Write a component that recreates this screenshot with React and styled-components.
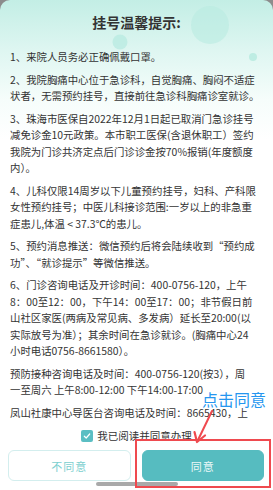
import React from 'react'
import styled, { createGlobalStyle } from 'styled-components'

const Global = createGlobalStyle`
  html, body { margin: 0; padding: 0; }
  *, *::before, *::after { box-sizing: border-box; }
  body {
    background: #8c8c8c;
    font-family: "Noto Sans CJK SC", "Noto Sans", sans-serif;
  }
`;

const Page = styled.div`
  position: relative;
  width: 273px;
  height: 490px;
  overflow: hidden;
`;

const Card = styled.div`
  height: 490px;
  display: flex;
  flex-direction: column;
  border-radius: 10px 10px 0 0;
  background: linear-gradient(180deg, #c3eee5 0px, #def6f1 50px, #f6fdfb 100px, #ffffff 140px);
  overflow: hidden;
`;

const Body = styled.div`
  position: relative;
  flex: 1;
  min-height: 0;
  overflow: hidden;
  padding: 12px 10px 0 10px;
`;

const Bubbles = styled.svg`
  position: absolute;
  left: 0;
  top: 0;
  pointer-events: none;
`;

const Title = styled.h2`
  position: relative;
  margin: 0 0 17px;
  text-align: center;
  font-size: 14px;
  line-height: 20px;
  font-weight: 700;
  color: #333;
`;

const Para = styled.div`
  position: relative;
  margin-bottom: 6px;
  font-size: 10.4px;
  line-height: 16.5px;
  color: #333;
`;

const Line = styled.div`
  white-space: nowrap;
`;

const Footer = styled.div`
  background: #fff;
  padding: 5px 0 0;
  display: flex;
  flex-direction: column;
  align-items: center;
  height: 66px;
  flex-shrink: 0;
`;

const Agree = styled.label`
  display: flex;
  align-items: center;
  gap: 4px;
  font-size: 10.5px;
  line-height: 14px;
  color: #333;
`;

const Check = styled.span`
  width: 12px;
  height: 12px;
  border-radius: 2px;
  background: #5bbec3;
  display: flex;
  align-items: center;
  justify-content: center;
`;

const Buttons = styled.div`
  align-self: stretch;
  display: flex;
  gap: 11px;
  padding: 0 9px 0 8px;
  margin-top: 7px;
`;

const Button = styled.button`
  flex: 1;
  height: 31px;
  border-radius: 6px;
  font-family: inherit;
  font-size: 11px;
  letter-spacing: 1px;
  border: 1px solid ${p => (p.$primary ? '#56bcc0' : '#d3eeee')};
  background: ${p => (p.$primary ? '#56bcc0' : '#fff')};
  color: ${p => (p.$primary ? '#eaf8f8' : '#7ccfcf')};
`;

const HomeBar = styled.div`
  width: 82px;
  height: 4px;
  border-radius: 2px;
  background: #a9a9a9;
  margin-top: 1px;
`;

const Highlight = styled.div`
  position: absolute;
  left: 135px;
  top: 439px;
  width: 136px;
  height: 49px;
  border: 2px solid #ef4a4f;
`;

const Arrow = styled.svg`
  position: absolute;
  left: 185px;
  top: 405px;
  pointer-events: none;
`;

const Hint = styled.span`
  position: absolute;
  left: 202px;
  top: 388px;
  font-size: 16px;
  line-height: 22px;
  color: #2596ef;
  white-space: nowrap;
`;

const paras = [
  ['1、来院人员务必正确佩戴口罩。'],
  ['2、我院胸痛中心位于急诊科，自觉胸痛、胸闷不适症', '状者，无需预约挂号，直接前往急诊科胸痛诊室就诊。'],
  [
    '3、珠海市医保自2022年12月1日起已取消门急诊挂号',
    '减免诊金10元政策。本市职工医保(含退休职工）签约',
    '我院为门诊共济定点后门诊诊金按70%报销(年度额度',
    '内）。',
  ],
  [
    '4、儿科仅限14周岁以下儿童预约挂号，妇科、产科限',
    '女性预约挂号；中医儿科接诊范围:一岁以上的非急重',
    '症患儿,体温 < 37.3℃的患儿。',
  ],
  ['5、预约消息推送：微信预约后将会陆续收到“预约成', '功”、“就诊提示”等微信推送。'],
  [
    '6、门诊咨询电话及开诊时间：400-0756-120，上午',
    '8：00至12：00，下午14：00至17：00；非节假日前',
    '山社区家医(两病及常见病、多发病）延长至20:00(以',
    '实际放号为准）；其余时间在急诊就诊。(胸痛中心24',
    '小时电话0756-8661580）。',
  ],
  ['预防接种咨询电话及时间：400-0756-120(按3），周', '一至周六 上午8:00-12:00 下午14:00-17:00'],
  ['凤山社康中心导医台咨询电话及时间：8665430，上', '午8:30-12:00 下午14:00-17:30'],
];

export default function App() {
  return (
    <Page>
      <Global />
      <Card>
        <Body>
          <Bubbles width="273" height="80" viewBox="0 0 273 80">
            <circle cx="210" cy="25" r="19" fill="#b9ebe1" opacity="0.6" />
            <circle cx="120" cy="42" r="7.5" fill="#b5eadf" opacity="0.7" />
            <circle cx="253" cy="57" r="4" fill="#b5eadf" opacity="0.8" />
          </Bubbles>
          <Title>挂号温馨提示:</Title>
          {paras.map((lines, i) => (
            <Para key={i}>
              {lines.map((l, j) => (
                <Line key={j}>{l}</Line>
              ))}
            </Para>
          ))}
        </Body>
        <Footer>
          <Agree>
            <Check>
              <svg width="8" height="8" viewBox="0 0 8 8">
                <path d="M1.3 4.2 L3.2 6 L6.7 2" fill="none" stroke="#fff" strokeWidth="1.2" strokeLinecap="round" strokeLinejoin="round" />
              </svg>
            </Check>
            我已阅读并同意办理
          </Agree>
          <Buttons>
            <Button>不同意</Button>
            <Button $primary>同意</Button>
          </Buttons>
          <HomeBar />
        </Footer>
      </Card>
      <Highlight />
      <Arrow width="40" height="42" viewBox="0 0 40 42">
        <path d="M27 6 L13 35" stroke="#ef4a4f" strokeWidth="2" fill="none" strokeLinecap="round" />
        <path d="M12 37 L9.5 27 M12 37 L20 30.5" stroke="#ef4a4f" strokeWidth="2.2" fill="none" strokeLinecap="round" />
      </Arrow>
      <Hint>点击同意</Hint>
    </Page>
  );
}
